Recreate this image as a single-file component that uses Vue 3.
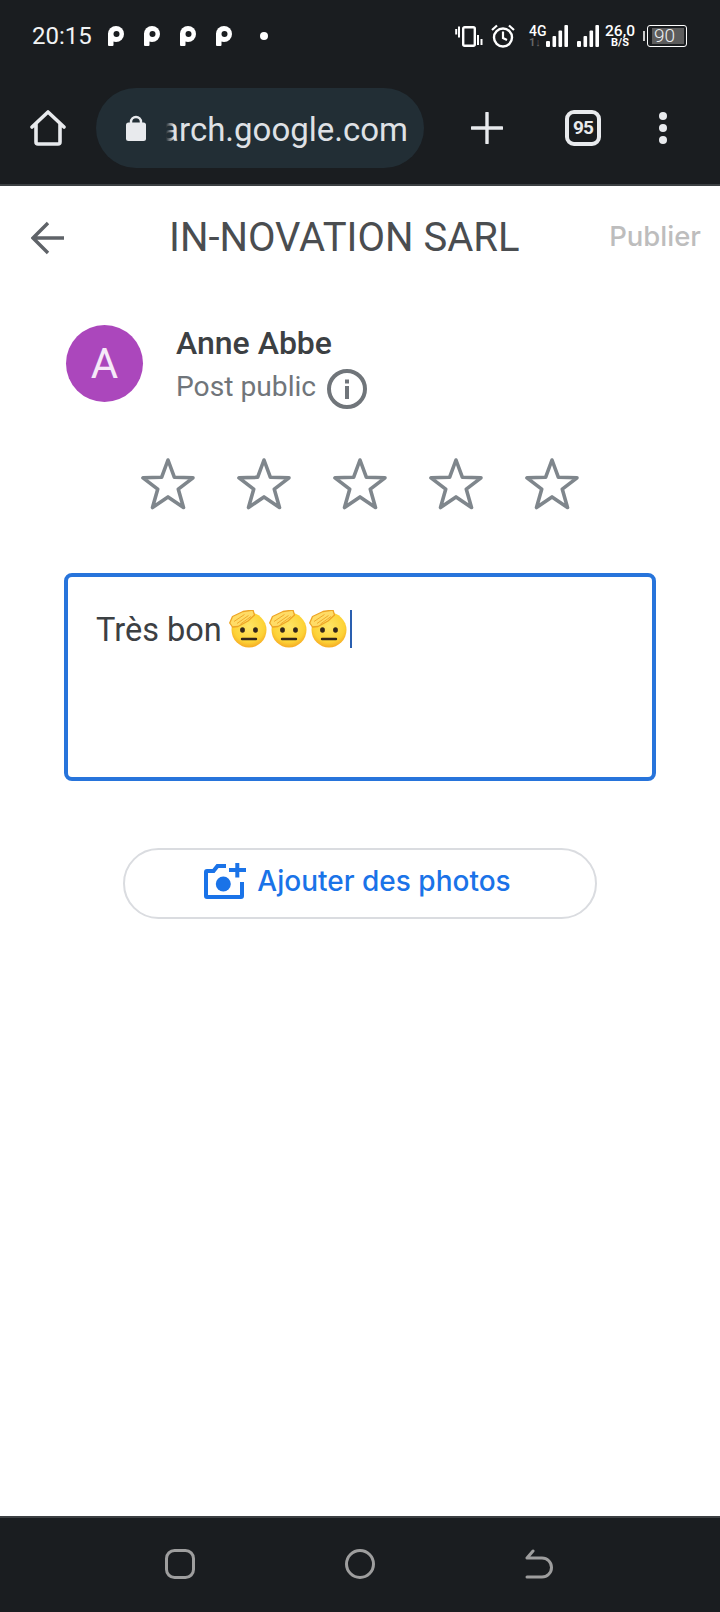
<script setup>
const stars = [1, 2, 3, 4, 5]
const emojis = [1, 2, 3]
const notifications = [1, 2, 3, 4]
</script>

<template>
  <div class="page">
    <header class="chrome">
      <div class="status">
        <span class="time">20:15</span>
        <svg v-for="n in notifications" :key="n" class="pin" viewBox="0 0 16 20">
          <rect x="0" y="7" width="5.500" height="13" rx="1" fill="#fff" />
          <circle cx="8" cy="8" r="8" fill="#fff" />
          <circle cx="8.500" cy="8" r="3" fill="#1a1d20" />
        </svg>
        <span class="dot"></span>
        <span class="spacer"></span>
        <svg class="vibrate" viewBox="0 0 30 24">
          <rect x="9.200" y="3.200" width="11.600" height="18.600" rx="1.500" fill="none" stroke="#fff" stroke-width="2.400" />
          <path d="M2.200 5v5.500M5 2.500v11M24 11v10M27.500 15v6" stroke="#fff" stroke-width="2" fill="none" />
        </svg>
        <svg class="alarm" viewBox="0 0 24 24">
          <circle cx="12" cy="13.500" r="9" fill="none" stroke="#fff" stroke-width="2.400" />
          <path d="M12 7.500v6.500l4 2M1 6l5-4.500M23 6l-5-4.500" stroke="#fff" stroke-width="2.200" fill="none" />
        </svg>
        <span class="net">
          <span class="net-top">4G</span>
          <span class="net-low">1↓</span>
        </span>
        <svg class="bars first" viewBox="0 0 22 22">
          <rect x="0" y="16" width="4" height="6" rx="1" fill="#fff" />
          <rect x="6.500" y="11" width="3.600" height="11" rx="1" fill="#fff" />
          <rect x="12.500" y="5.500" width="3.600" height="16.500" rx="1" fill="#fff" />
          <rect x="18.400" y="0" width="3.600" height="22" rx="1" fill="#fff" />
        </svg>
        <svg class="bars second" viewBox="0 0 22 22">
          <rect x="0" y="16" width="4" height="6" rx="1" fill="#fff" />
          <rect x="6.500" y="11" width="3.600" height="11" rx="1" fill="#fff" />
          <rect x="12.500" y="5.500" width="3.600" height="16.500" rx="1" fill="#fff" />
          <rect x="18.400" y="0" width="3.600" height="22" rx="1" fill="#fff" />
        </svg>
        <span class="speed">
          <span class="speed-top">26,0</span>
          <span class="speed-low">B/S</span>
        </span>
        <span class="battery-cap"></span>
        <span class="battery"><span class="battery-fill">90</span></span>
      </div>

      <div class="toolbar">
        <svg class="home" viewBox="0 0 36 36">
          <path d="M2 17 18 2l16 15M6 14v18a2 2 0 0 0 2 2h20a2 2 0 0 0 2-2V14" fill="none" stroke="#e8eaed" stroke-width="3.600" stroke-linecap="round" stroke-linejoin="round" />
        </svg>
        <div class="omnibox">
          <svg class="lock" viewBox="0 0 20 26">
            <path d="M5 10V7a5 5 0 0 1 10 0v3" fill="none" stroke="#e8eaed" stroke-width="2.400" />
            <rect x="0" y="7.500" width="20" height="18.500" rx="2.500" fill="#e8eaed" />
          </svg>
          <span class="url">
            <span class="url-text">search.google.com</span>
            <span class="url-fade"></span>
          </span>
        </div>
        <svg class="plus" viewBox="0 0 32 32">
          <path d="M16 1v30M1 16h30" stroke="#e8eaed" stroke-width="3.400" stroke-linecap="round" />
        </svg>
        <span class="tabs">95</span>
        <span class="menu"><i></i><i></i><i></i></span>
      </div>
    </header>

    <main class="content">
      <div class="title-row">
        <svg class="back" viewBox="0 0 34 34">
          <path d="M33 17H3M17 2 2 17l15 15" fill="none" stroke="#5f6368" stroke-width="3.400" />
        </svg>
        <h1 class="title">IN-NOVATION SARL</h1>
        <span class="publish">Publier</span>
      </div>

      <div class="author">
        <div class="avatar">A</div>
        <div class="author-text">
          <div class="name">Anne Abbe</div>
          <div class="visibility">
            <span>Post public</span>
            <svg class="info" viewBox="0 0 40 40">
              <circle cx="20" cy="20" r="18" fill="none" stroke="#70757a" stroke-width="4" />
              <rect x="18" y="17" width="4" height="13" fill="#70757a" />
              <rect x="18" y="10.500" width="4" height="4" fill="#70757a" />
            </svg>
          </div>
        </div>
      </div>

      <div class="stars">
        <svg v-for="s in stars" :key="s" class="star" viewBox="0 0 54 53">
          <path d="M27 3 33.400 20.300 52 20.800 37.300 32.200 42.500 50.500 27 39.900 11.500 50.500 16.700 32.200 2 20.800 20.600 20.300Z" fill="none" stroke="#7f868c" stroke-width="3.600" stroke-linejoin="round" />
        </svg>
      </div>

      <div class="editor">
        <div class="editor-line">
          <span class="editor-text">Très bon</span>
          <svg v-for="e in emojis" :key="e" class="emoji" viewBox="0 0 38 38">
            <defs>
              <radialGradient id="face" cx="50%" cy="40%" r="62%">
                <stop offset="0%" stop-color="#ffe566" />
                <stop offset="72%" stop-color="#fdd235" />
                <stop offset="100%" stop-color="#f5a623" />
              </radialGradient>
            </defs>
            <circle cx="20" cy="20" r="17.500" fill="url(#face)" />
            <ellipse cx="13.500" cy="20" rx="2.400" ry="2.800" fill="#33261a" />
            <ellipse cx="26.500" cy="20" rx="2.400" ry="2.800" fill="#33261a" />
            <path d="M13 29h14" stroke="#33261a" stroke-width="2.400" stroke-linecap="round" />
            <path d="M.7 13 3.500 6.500 14 1.500 24-.0l1.500 5L19 11l-10 5.500-5.500.5Z" fill="#ffdc66" stroke="#eea526" stroke-width="1.300" stroke-linejoin="round" />
            <path d="M5 11.500 15.500 4.500M8 13.500 19.500 5.500M11.500 14 22 6.500" stroke="#eea526" stroke-width=".9" />
          </svg>
          <span class="caret"></span>
        </div>
      </div>

      <button class="add-photos" type="button">
        <svg class="camera" viewBox="0 0 42 38">
          <path d="M22 1H12.500L8.500 6H3a3 3 0 0 0-3 3v24a3 3 0 0 0 3 3h34a3 3 0 0 0 3-3V19h-4v13H4V10h6.500l4-5H22Z" fill="#1a73e8" />
          <circle cx="19.300" cy="21" r="7.500" fill="#1a73e8" />
          <path d="M33.300 0v14.500M25 7h17" stroke="#1a73e8" stroke-width="4" />
        </svg>
        <span class="add-label">Ajouter des photos</span>
      </button>
    </main>

    <footer class="nav">
      <svg class="nav-icon" viewBox="0 0 30 30">
        <rect x="1.500" y="1.500" width="27" height="27" rx="8" fill="none" stroke="#9e9e9e" stroke-width="3" />
      </svg>
      <svg class="nav-icon" viewBox="0 0 30 30">
        <circle cx="15" cy="15" r="13.500" fill="none" stroke="#9e9e9e" stroke-width="3" />
      </svg>
      <svg class="nav-icon" viewBox="0 0 30 30">
        <path d="M2 28h15a9.500 9.500 0 0 0 0-19H2M8 2 2 9" fill="none" stroke="#9e9e9e" stroke-width="3" stroke-linecap="round" stroke-linejoin="round" />
      </svg>
    </footer>
  </div>
</template>

<style>
html,
body {
  margin: 0;
  background: #fff;
}
</style>

<style scoped>
.page {
  width: 720px;
  height: 1612px;
  display: flex;
  flex-direction: column;
  overflow: hidden;
  font-family: Roboto, "Liberation Sans", sans-serif;
  background: #fff;
}

.chrome {
  flex: none;
  height: 184px;
  background: #1a1d20;
  border-bottom: 2px solid #3c4043;
  display: flex;
  flex-direction: column;
}

.status {
  height: 72px;
  display: flex;
  align-items: center;
  padding: 0 33px 0 32px;
  color: #fff;
}

.time {
  width: 58px;
  margin-right: 18px;
  font-size: 24px;
  color: #f1f3f4;
  white-space: nowrap;
}

.pin {
  width: 16px;
  height: 20px;
  margin-right: 20px;
}

.dot {
  width: 8px;
  height: 8px;
  margin-left: 8px;
  border-radius: 50%;
  background: #fff;
}

.spacer {
  flex: 1;
}

.vibrate {
  width: 30px;
  height: 24px;
}

.alarm {
  width: 24px;
  height: 24px;
  margin-left: 7px;
}

.net {
  width: 20px;
  margin-left: 14px;
  display: flex;
  flex-direction: column;
  gap: 1px;
}

.net-top {
  font-size: 14px;
  font-weight: 500;
  line-height: 12px;
}

.net-low {
  font-size: 11px;
  font-weight: 700;
  line-height: 9px;
  color: #666;
}

.bars {
  width: 22px;
  height: 22px;
}

.bars.first {
  margin-left: -3px;
}

.bars.second {
  margin-left: 9px;
}

.speed {
  width: 30px;
  margin-left: 6px;
  display: flex;
  flex-direction: column;
  align-items: center;
  gap: 1px;
}

.speed-top {
  font-size: 15.500px;
  font-weight: 500;
  line-height: 12px;
}

.speed-low {
  font-size: 11px;
  font-weight: 700;
  line-height: 9px;
}

.battery-cap {
  width: 2px;
  height: 10px;
  margin-left: 8px;
  background: #ccc;
}

.battery {
  width: 40px;
  height: 22px;
  margin-left: 2px;
  padding: 2px 2px 2px 4px;
  box-sizing: border-box;
  border: 1.500px solid #fff;
  border-radius: 3px;
  display: flex;
}

.battery-fill {
  flex: 1;
  padding-left: 2px;
  background: #5c5c5c;
  color: #eceff1;
  font-size: 19px;
  font-weight: 300;
  line-height: 16px;
}

.toolbar {
  height: 80px;
  margin-top: 16px;
  display: flex;
  align-items: center;
}

.home {
  width: 36px;
  height: 36px;
  margin-left: 30px;
}

.omnibox {
  width: 328px;
  height: 80px;
  margin-left: 30px;
  box-sizing: border-box;
  padding-left: 30px;
  border-radius: 40px;
  background: #222e35;
  display: flex;
  align-items: center;
}

.lock {
  width: 20px;
  height: 26px;
}

.url {
  position: relative;
  width: 242px;
  margin: 4px 0 0 20px;
  overflow: hidden;
  display: flex;
  justify-content: flex-end;
}

.url-text {
  flex: none;
  font-size: 33px;
  line-height: 44px;
  color: #dfe1e5;
  white-space: nowrap;
}

.url-fade {
  position: absolute;
  left: 0;
  top: 0;
  bottom: 0;
  width: 8px;
  background: linear-gradient(90deg, #222e35, rgba(34, 46, 53, 0));
}

.plus {
  width: 32px;
  height: 32px;
  margin-left: 47px;
}

.tabs {
  width: 36px;
  height: 36px;
  margin-left: 62px;
  box-sizing: border-box;
  border: 4px solid #e8eaed;
  border-radius: 9px;
  color: #e8eaed;
  font-size: 19px;
  font-weight: 700;
  letter-spacing: -1px;
  line-height: 28px;
  text-align: center;
}

.menu {
  width: 8px;
  margin-left: 58px;
  display: flex;
  flex-direction: column;
  gap: 4px;
}

.menu i {
  width: 8px;
  height: 8px;
  border-radius: 50%;
  background: #e8eaed;
}

.content {
  flex: 1;
  display: flex;
  flex-direction: column;
}

.title-row {
  height: 64px;
  margin-top: 20px;
  display: flex;
  align-items: center;
}

.back {
  width: 34px;
  height: 34px;
  margin-left: 31px;
}

.title {
  margin: 0 0 0 104px;
  font-size: 40px;
  font-weight: 400;
  line-height: 64px;
  color: #4a4d50;
  white-space: nowrap;
}

.publish {
  margin: 0 19px 4px auto;
  font-family: Inter, sans-serif;
  font-size: 27.500px;
  font-weight: 500;
  color: #bdbdbd;
}

.author {
  margin: 55px 0 0 66px;
  display: flex;
}

.avatar {
  width: 77px;
  height: 77px;
  border-radius: 50%;
  background: #ab47bc;
  color: #f6e9f8;
  font-size: 42px;
  line-height: 77px;
  text-align: center;
}

.author-text {
  margin-left: 33px;
}

.name {
  font-size: 32px;
  font-weight: 500;
  line-height: 36px;
  color: #3c4043;
}

.visibility {
  margin-top: 4px;
  display: flex;
  align-items: center;
  font-size: 28.200px;
  line-height: 40px;
  color: #70757a;
}

.info {
  width: 40px;
  height: 40px;
  margin-left: 11px;
  margin-top: 4px;
}

.stars {
  margin-top: 48px;
  padding-left: 141px;
  display: flex;
  gap: 42px;
}

.star {
  width: 54px;
  height: 53px;
}

.editor {
  width: 592px;
  height: 208px;
  margin: 63px 0 0 64px;
  box-sizing: border-box;
  padding: 33px 28px;
  border: 4px solid #2774db;
  border-radius: 8px;
}

.editor-line {
  display: flex;
  align-items: center;
  height: 38px;
}

.editor-text {
  margin: 2px 7px 0 0;
  font-size: 32.500px;
  color: #3c4043;
}

.emoji {
  width: 38px;
  height: 38px;
  margin-right: 2px;
}

.caret {
  width: 2px;
  height: 38px;
  margin-left: 1px;
  background: #2a5fb0;
}

.add-photos {
  width: 474px;
  height: 71px;
  margin: 67px 0 0 123px;
  padding: 0 5px 0 0;
  background: #fff;
  border: 2px solid #dadce0;
  border-radius: 36px;
  display: flex;
  align-items: center;
  justify-content: center;
  gap: 11px;
  font-family: Inter, sans-serif;
  font-size: 28px;
  font-weight: 500;
  color: #1a73e8;
}

.add-label {
  margin-top: -6px;
}

.camera {
  width: 42px;
  height: 38px;
  margin-top: -3px;
}

.nav {
  flex: none;
  height: 96px;
  box-sizing: border-box;
  padding-bottom: 2px;
  border-top: 2px solid #3c4043;
  background: #1a1d20;
  display: flex;
  align-items: center;
  justify-content: center;
  gap: 150px;
}

.nav-icon {
  width: 30px;
  height: 30px;
}
</style>
